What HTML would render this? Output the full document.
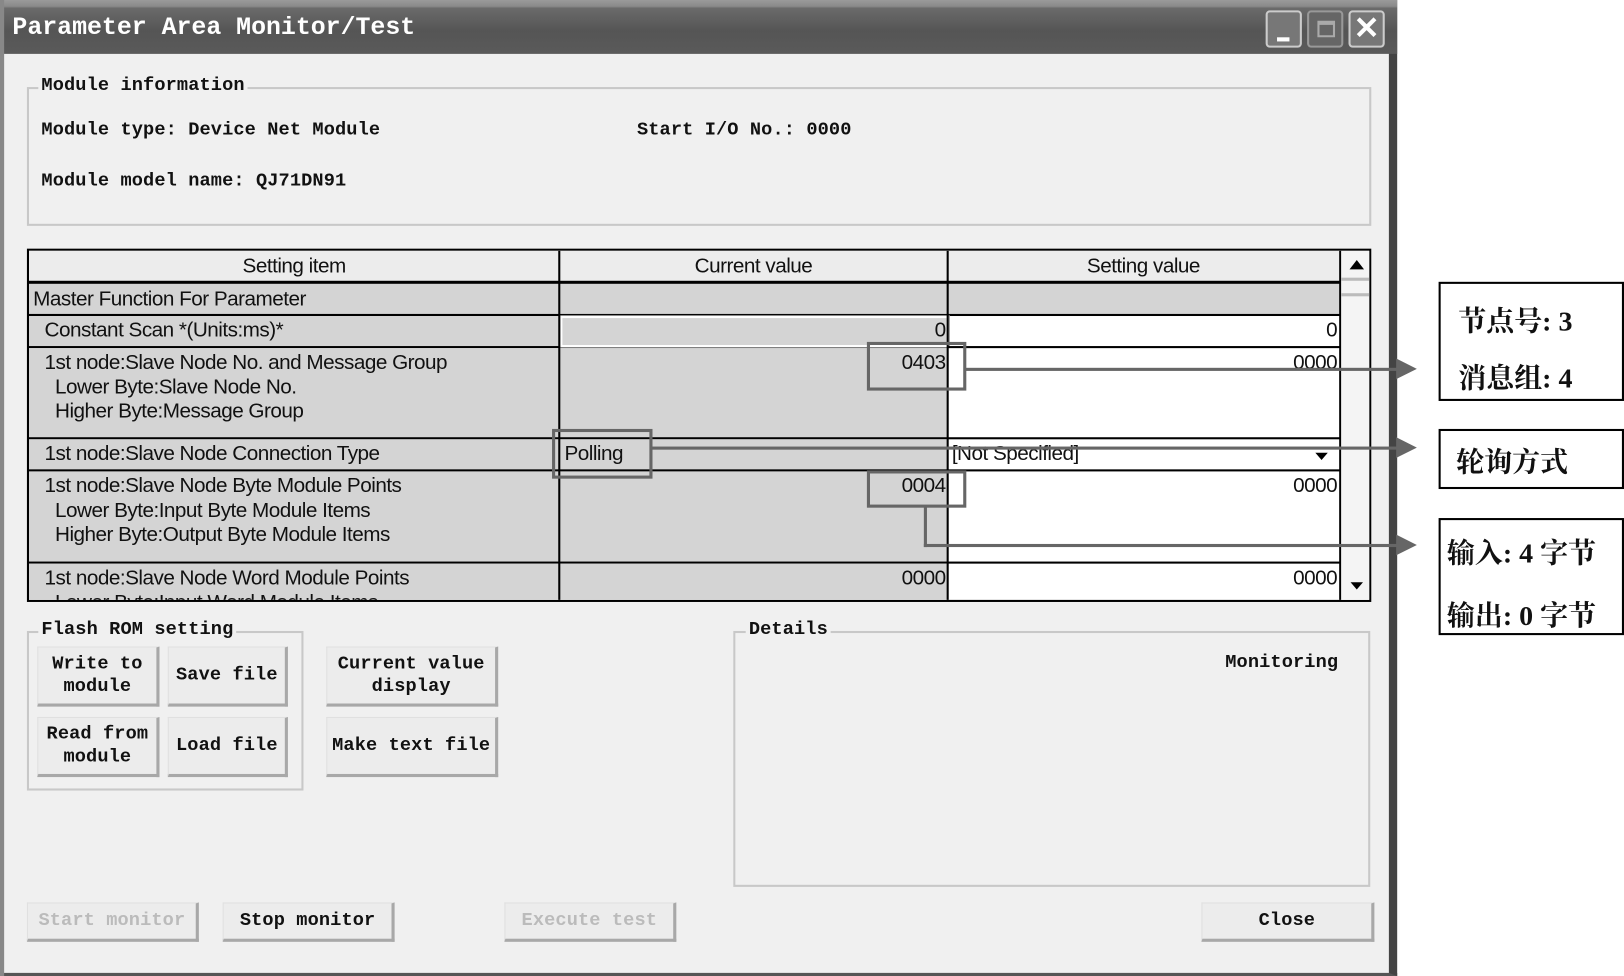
<!DOCTYPE html>
<html><head><meta charset="utf-8"><style>
*{margin:0;padding:0;box-sizing:border-box}
html,body{width:1624px;height:976px;overflow:hidden;background:#fff}
#w{position:absolute;left:0;top:0;width:1568px;height:942px;transform-origin:0 0;transform:scale(1.03571,1.03609)}
.a{position:absolute}
.m{font-family:"Liberation Mono",monospace;font-size:18px;color:#111;white-space:nowrap;font-weight:bold;letter-spacing:0.1px}
.s{font-family:"Liberation Sans",sans-serif;font-size:20px;color:#111;white-space:nowrap;letter-spacing:-0.5px}
.grp{position:absolute;border:2px solid #c8c8c8}
.lbl{position:absolute;background:#f0f0f0;padding:0 3px}
.btn{position:absolute;background:#ececec;border:1px solid #e0e0e0;border-right:3px solid #a8a8a8;border-bottom:3px solid #a8a8a8;display:flex;align-items:center;justify-content:center;text-align:center;line-height:22px}
.dis{color:#bbb}
.g{background:#d4d4d4}
.cn{font-family:"Liberation Serif","Noto Serif CJK SC",serif;font-size:27px;color:#111;white-space:nowrap;font-weight:bold}
.ab{position:absolute;border:3px solid #666}
.ln{position:absolute;background:#666}
</style></head><body><div id="w">
<div class="a" style="left:0;top:0;width:1349px;height:942px;background:#f0f0f0;border-right:8px solid #444;border-bottom:3px solid #555"></div>
<div class="a" style="left:0;top:0;width:1349px;height:52px;background:linear-gradient(#9a9a9a 0,#8a8a8a 6px,#6a6a6a 8px,#555 30px,#5a5a5a 52px)"></div>
<div class="a" style="left:0;top:0;width:4px;height:942px;background:#888"></div>
<div class="a m" style="left:12px;top:14px;font-size:24px;color:#fff;font-weight:bold;letter-spacing:0">Parameter Area Monitor/Test</div>
<div class="a" style="left:1222px;top:10px;width:35px;height:36px;border:2px solid #ccc;border-radius:4px;background:#777"><div class="a" style="left:9px;top:24px;width:12px;height:4px;background:#fff"></div></div>
<div class="a" style="left:1262px;top:10px;width:35px;height:36px;border:2px solid #999;border-radius:4px;background:#666"><div class="a" style="left:8px;top:8px;width:17px;height:16px;border:2px solid #aaa;border-top-width:4px"></div></div>
<div class="a" style="left:1302px;top:10px;width:35px;height:36px;border:2px solid #ccc;border-radius:4px;background:#777;color:#fff;font:bold 30px 'Liberation Sans',sans-serif;text-align:center;line-height:32px">✕</div>

<div class="grp" style="left:26px;top:84px;width:1298px;height:134px"></div>
<div class="lbl m" style="left:37px;top:73px">Module information</div>
<div class="a m" style="left:40px;top:116px">Module type: Device Net Module</div>
<div class="a m" style="left:615px;top:116px">Start I/O No.:  0000</div>
<div class="a m" style="left:40px;top:165px">Module model name: QJ71DN91</div>

<div class="a" style="left:26px;top:240px;width:1298px;height:341px;border:2px solid #000;background:#fff;overflow:hidden">
 <div class="a" style="left:0;top:0;width:1266px;height:32px;background:#ececec;border-bottom:3px solid #000"></div>
 <div class="a s" style="left:0;top:4px;width:512px;text-align:center">Setting item</div>
 <div class="a s" style="left:512px;top:4px;width:375px;text-align:center">Current value</div>
 <div class="a s" style="left:887px;top:4px;width:378px;text-align:center">Setting value</div>
 <div class="a g" style="left:0;top:32px;width:1266px;height:31px;border-bottom:2px solid #000"></div>
 <div class="a s" style="left:4px;top:36px">Master Function For Parameter</div>
 <div class="a g" style="left:0;top:63px;width:887px;height:31px;border-bottom:2px solid #000"></div>
 <div class="a" style="left:513px;top:63px;width:375px;height:30px;border:2px solid #fff;outline:1px solid #888"></div>
 <div class="a s" style="left:15px;top:66px">Constant Scan *(Units:ms)*</div>
 <div class="a s" style="left:513px;top:66px;width:372px;text-align:right">0</div>
 <div class="a" style="left:887px;top:63px;width:379px;height:31px;border-bottom:2px solid #000"></div>
 <div class="a s" style="left:887px;top:66px;width:376px;text-align:right">0</div>
 <div class="a g" style="left:0;top:94px;width:887px;height:88px;border-bottom:2px solid #000"></div>
 <div class="a" style="left:887px;top:94px;width:379px;height:88px;border-bottom:2px solid #000"></div>
 <div class="a s" style="left:15px;top:97px;line-height:23.5px">1st node:Slave Node No. and Message Group<br>&nbsp;&nbsp;Lower Byte:Slave Node No.<br>&nbsp;&nbsp;Higher Byte:Message Group</div>
 <div class="a s" style="left:513px;top:97px;width:372px;text-align:right">0403</div>
 <div class="a s" style="left:887px;top:97px;width:376px;text-align:right">0000</div>
 <div class="a g" style="left:0;top:182px;width:887px;height:31px;border-bottom:2px solid #000"></div>
 <div class="a" style="left:887px;top:182px;width:379px;height:31px;border-bottom:2px solid #000"></div>
 <div class="a s" style="left:15px;top:185px">1st node:Slave Node Connection Type</div>
 <div class="a s" style="left:517px;top:185px">Polling</div>
 <div class="a s" style="left:891px;top:185px">[Not Specified]</div>
 <div class="a" style="left:1242px;top:195px;width:0;height:0;border-left:6px solid transparent;border-right:6px solid transparent;border-top:7px solid #000"></div>
 <div class="a g" style="left:0;top:213px;width:887px;height:89px;border-bottom:2px solid #000"></div>
 <div class="a" style="left:887px;top:213px;width:379px;height:89px;border-bottom:2px solid #000"></div>
 <div class="a s" style="left:15px;top:216px;line-height:23.5px">1st node:Slave Node Byte Module Points<br>&nbsp;&nbsp;Lower Byte:Input Byte Module Items<br>&nbsp;&nbsp;Higher Byte:Output Byte Module Items</div>
 <div class="a s" style="left:513px;top:216px;width:372px;text-align:right">0004</div>
 <div class="a s" style="left:887px;top:216px;width:376px;text-align:right">0000</div>
 <div class="a g" style="left:0;top:302px;width:887px;height:40px"></div>
 <div class="a s" style="left:15px;top:305px;line-height:23.5px">1st node:Slave Node Word Module Points<br>&nbsp;&nbsp;Lower Byte:Input Word Module Items</div>
 <div class="a s" style="left:513px;top:305px;width:372px;text-align:right">0000</div>
 <div class="a s" style="left:887px;top:305px;width:376px;text-align:right">0000</div>
 <div class="a" style="left:511px;top:0;width:2px;height:341px;background:#000"></div>
 <div class="a" style="left:886px;top:0;width:2px;height:341px;background:#000"></div>
 <div class="a" style="left:1265px;top:0;width:2px;height:341px;background:#000"></div>
 <div class="a" style="left:1267px;top:0;width:29px;height:341px;background:#f4f4f4"></div>
 <div class="a" style="left:1267px;top:26px;width:29px;height:18px;border-top:3px solid #bbb;border-bottom:3px solid #bbb"></div>
 <div class="a" style="left:1275px;top:9px;border-left:7px solid transparent;border-right:7px solid transparent;border-bottom:9px solid #000"></div>
 <div class="a" style="left:1276px;top:320px;border-left:6px solid transparent;border-right:6px solid transparent;border-top:7px solid #000"></div>
</div>

<div class="ab" style="left:837px;top:330px;width:96px;height:47px"></div>
<div class="ab" style="left:533px;top:414px;width:97px;height:48px"></div>
<div class="ab" style="left:837px;top:454px;width:96px;height:36px"></div>
<div class="ln" style="left:932px;top:355px;width:420px;height:3px"></div>
<div class="ln" style="left:629px;top:431px;width:723px;height:3px"></div>
<div class="ln" style="left:892px;top:489px;width:3px;height:39px"></div>
<div class="ln" style="left:892px;top:525px;width:460px;height:3px"></div>
<div class="a" style="left:1348px;top:346px;border-top:10px solid transparent;border-bottom:10px solid transparent;border-left:20px solid #666"></div>
<div class="a" style="left:1348px;top:422px;border-top:10px solid transparent;border-bottom:10px solid transparent;border-left:20px solid #666"></div>
<div class="a" style="left:1348px;top:516px;border-top:10px solid transparent;border-bottom:10px solid transparent;border-left:20px solid #666"></div>
<div class="a" style="left:1389px;top:272px;width:179px;height:115px;border:2px solid #000"></div>
<div class="a cn" style="left:1408px;top:288px">节点号: 3</div>
<div class="a cn" style="left:1408px;top:343px">消息组: 4</div>
<div class="a" style="left:1389px;top:414px;width:179px;height:58px;border:2px solid #000"></div>
<div class="a cn" style="left:1406px;top:424px">轮询方式</div>
<div class="a" style="left:1389px;top:500px;width:179px;height:113px;border:2px solid #000"></div>
<div class="a cn" style="left:1397px;top:512px">输入: 4 字节</div>
<div class="a cn" style="left:1397px;top:572px">输出: 0 字节</div>

<div class="grp" style="left:26px;top:609px;width:267px;height:154px"></div>
<div class="lbl m" style="left:37px;top:598px">Flash ROM setting</div>
<div class="btn m" style="left:36px;top:624px;width:118px;height:58px">Write to<br>module</div>
<div class="btn m" style="left:162px;top:624px;width:116px;height:58px">Save file</div>
<div class="btn m" style="left:36px;top:692px;width:118px;height:58px">Read from<br>module</div>
<div class="btn m" style="left:162px;top:692px;width:116px;height:58px">Load file</div>
<div class="btn m" style="left:315px;top:624px;width:166px;height:58px">Current value<br>display</div>
<div class="btn m" style="left:315px;top:692px;width:166px;height:58px">Make text file</div>

<div class="grp" style="left:708px;top:609px;width:615px;height:247px"></div>
<div class="lbl m" style="left:720px;top:598px">Details</div>
<div class="a m" style="left:1183px;top:630px">Monitoring</div>

<div class="btn m dis" style="left:26px;top:871px;width:166px;height:38px">Start monitor</div>
<div class="btn m" style="left:215px;top:871px;width:166px;height:38px">Stop monitor</div>
<div class="btn m dis" style="left:487px;top:871px;width:166px;height:38px">Execute test</div>
<div class="btn m" style="left:1160px;top:871px;width:167px;height:38px">Close</div>
</div></body></html>
